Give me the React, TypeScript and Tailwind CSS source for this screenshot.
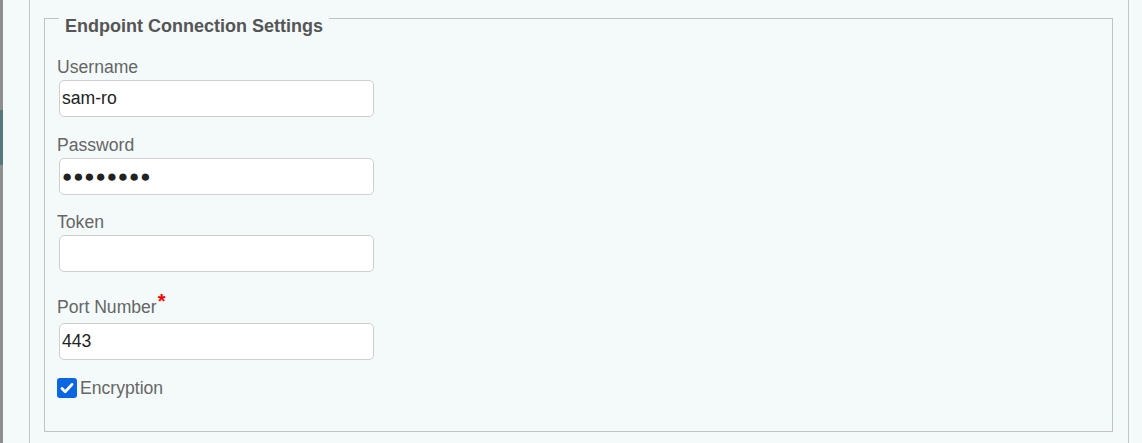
import React from "react";

type FieldProps = {
  label: string;
  value?: string;
  required?: boolean;
  masked?: boolean;
  className?: string;
};

function Field({ label, value = "", required, masked, className = "" }: FieldProps) {
  return (
    <div className={className}>
      <label className="block h-[20px] text-[17.6px] leading-[20px] text-[#666]">
        {label}
        {required && <span className="ml-[1px] align-[5px] text-[20px] leading-none font-bold text-[#f00]">*</span>}
      </label>
      <input
        type="text"
        readOnly
        value={value}
        className={
          "mt-[3px] ml-[2px] block h-[37px] w-[315px] rounded-[5px] border border-[#cfcfcf] bg-white px-[2px] text-[#222] outline-none " +
          (masked ? "text-[17px] tracking-[0.9px]" : "text-[17.6px]")
        }
      />
    </div>
  );
}

export default function App() {
  return (
    <div className="flex h-[443px] w-full overflow-hidden bg-[#f3faf9] font-['Liberation_Sans',Arial,sans-serif]">
      <div className="flex w-[3px] flex-col">
        <div className="h-[110px] bg-[#8e8e8e]" />
        <div className="h-[55px] bg-[#56787a]" />
        <div className="flex-1 bg-[#8e8e8e]" />
      </div>
      <div className="ml-[26px] mr-[13px] flex-1 border-x border-[#c4c4c4] pl-[14px] pr-[15px]">
        <fieldset className="h-[432px] border border-[#c2c2c2] px-[12px]">
          <legend className="ml-[2px] px-[6px] pt-[16px] text-[18px] leading-[20px] font-bold text-[#555]">
            Endpoint Connection Settings
          </legend>
          <div className="pt-[21px]">
            <Field label="Username" value="sam-ro" />
            <Field label="Password" value="●●●●●●●●" masked className="mt-[18px]" />
            <Field label="Token" className="mt-[17px]" />
            <Field label="Port Number" value="443" required className="mt-[19px] [&_input]:mt-[12px]" />
            <label className="mt-[18px] flex items-center text-[17.6px] leading-[20px] text-[#666]">
              <span className="flex h-[20px] w-[20px] items-center justify-center rounded-[3px] bg-[#0b66e4]">
                <svg viewBox="0 0 16 16" className="h-[16px] w-[16px]" fill="none" stroke="white" strokeWidth="2.8" strokeLinecap="round" strokeLinejoin="round">
                  <path d="M3 8.6l3.2 3.2L13 4.4" />
                </svg>
              </span>
              <span className="ml-[3px]">Encryption</span>
            </label>
          </div>
        </fieldset>
      </div>
    </div>
  );
}
